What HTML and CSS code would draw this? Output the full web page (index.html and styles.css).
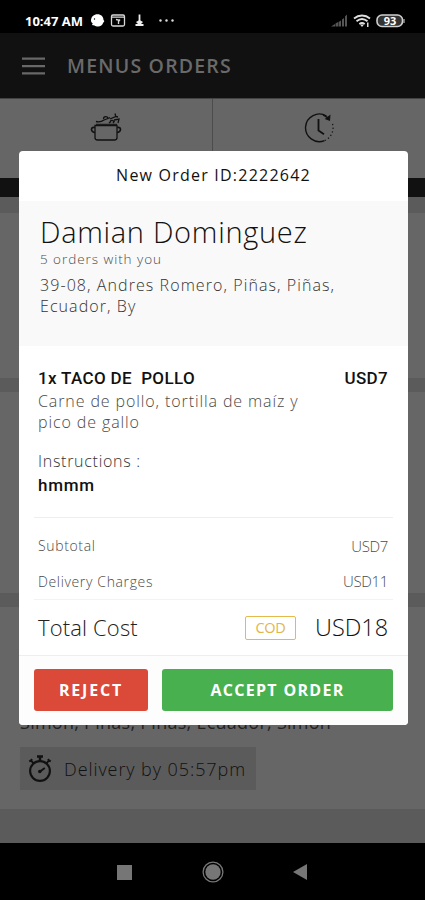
FILE: index.html
```
<!DOCTYPE html>
<html lang="en">
<head>
<meta charset="utf-8">
<title>Menus Orders</title>
<link rel="stylesheet" href="styles.css">
</head>
<body>
<div class="screen">
  <div class="status">
    <span class="time">10:47 AM</span>
    <svg class="notif" width="86" height="16" viewBox="0 0 86 16">
      <path fill="#fff" d="M1 7.500C1 3.500 4 1.200 7.500 1.200S13.500 3.500 13.500 7c1.200 1 .8 2.200-.2 2.500C12.500 12 10.500 13.500 8 13.500c-1.500 0-2.500-.3-3.500-1L2 12l.7-1.700C1.500 9.700 1 8.700 1 7.500z"/>
      <circle cx="4.500" cy="6" r=".7"/>
      <rect x="21.500" y="2" width="13" height="11" rx="1.500" fill="none" stroke="#d8d8d8" stroke-width="1.300"/>
      <path d="M22 4.200h12M26 6.500l2.500.5V11M30 6.500l-1.500 2" fill="none" stroke="#d8d8d8" stroke-width="1.300"/>
      <path d="M49.500 1.500v7M45.500 12h8" fill="none" stroke="#eee" stroke-width="1.800"/>
      <path d="M46 9l3.500 3.500L53 9l-2.500-1.500h-2z" fill="#eee"/>
      <g fill="#ddd"><circle cx="70.500" cy="7.500" r="1.200"/><circle cx="76.500" cy="7.500" r="1.200"/><circle cx="82.500" cy="7.500" r="1.200"/></g>
    </svg>
    <svg class="signals" width="76" height="16" viewBox="0 0 76 16">
      <g fill="#555"><path d="M0 13.500l4-2.500v2.500zM4.500 10.500l2.500-1.500v4.500H4.500zM7.500 9l2.500-1.500v6H7.500zM11 6.500l2-1.500v8.500h-2zM14 3.500l2-2v12h-2z"/></g>
      <g fill="none" stroke="#ddd" stroke-width="1.800"><path d="M23 5.500c4.700-4 11.300-4 16 0M25.500 8.300c3.400-2.800 7.600-2.800 11 0M28.300 11c1.800-1.300 3.600-1.300 5.400 0"/></g>
      <path d="M29 11.500h4l-2 2.500zM36 9.500h1.500V14H36z" fill="#ddd"/>
      <rect x="46" y="2" width="25.500" height="11.500" rx="5" fill="#333" stroke="#d0d0d0" stroke-width="1.600"/>
      <path d="M73 6v4" stroke="#bbb" stroke-width="1.200"/>
      <text x="59" y="11.500" text-anchor="middle" class="battery">93</text>
    </svg>
  </div>

  <header class="appbar">
    <svg width="24" height="18" viewBox="0 0 24 18"><path d="M0 1.700h23M0 9.200h23M0 16.300h23" stroke="#686868" stroke-width="2.200"/></svg>
    <h1>MENUS ORDERS</h1>
  </header>

  <div class="tabs">
    <div class="tab">
      <svg width="32" height="30" viewBox="0 0 32 30" fill="none" stroke="#111" stroke-width="1.300">
        <path d="M5 13.500h22v12q0 2.500-2.500 2.500h-17Q5 28 5 25.500z"/>
        <path d="M4.800 15.500C2.500 15 1.500 16 1.500 17.500s1.800 3 3.500 3M27.200 15.500c2.300-.5 3.300.5 3.300 2s-1.800 3-3.500 3" stroke-width="1.600"/>
        <path d="M6 12.300h21" stroke-width="1"/>
        <path d="M6 9.500c3 .8 5.500.3 8-1.500l4-1.500 2-1M13.500 7c0-3 4-3.200 4.500-.5M20 7l6-2.500 2 .5M20 9.500c1.500-1.500 3-1.500 4 .5M25 1.500l.8 3M24 8l5-1-1 4M19 11l2-1.500M23 11l1.500-2" stroke-width="1.300"/>
      </svg>
    </div>
    <div class="tab">
      <svg width="32" height="32" viewBox="0 0 32 32" fill="none" stroke="#111">
        <path d="M23.500 4A13.800 13.800 0 1 0 21.500 28.600" stroke-width="1.400"/>
        <path d="M29.500 12A13.800 13.800 0 0 1 21.500 28.600" stroke-width="1.300" stroke-dasharray="1.200 2.500"/>
        <path d="M20 2.800l5 3" stroke-width="1.400"/>
        <path d="M27.500 2.500l-.5 6.500-5.300-2z" fill="#111" stroke="none"/>
        <path d="M15.500 7v11.500l5.500 3.700" stroke-width="1.800"/>
      </svg>
    </div>
  </div>
  <div class="strip"></div>

  <main class="feed">
    <div class="card first"></div>
    <div class="card second"></div>
    <div class="card third">
      <p class="addr">Simon, Piñas, Piñas, Ecuador, Simon</p>
      <div class="chip">
        <svg width="24" height="28" viewBox="0 0 24 28" fill="none" stroke="#111">
          <circle cx="12" cy="16" r="9.900" stroke-width="2.100"/>
          <path d="M9 1.600h6M12 1.500v5" stroke-width="2.500"/>
          <path d="M1.300 6.500l3-2.300M22.700 6.500l-3-2.300M3 5.300l2.500 3M21 5.300l-2.500 3" stroke-width="1.900"/>
          <path d="M12 16.500l4.800-3.500" stroke-width="2"/><circle cx="11.800" cy="16.500" r="1.800" fill="#111" stroke="none"/>
        </svg>
        <span>Delivery by 05:57pm</span>
      </div>
    </div>
  </main>

  <nav class="navbar">
    <svg width="15" height="15"><rect width="15" height="15" fill="#767676"/></svg>
    <svg width="22" height="22" viewBox="0 0 22 22"><circle cx="11" cy="11" r="9.900" fill="none" stroke="#777" stroke-width="1.300"/><circle cx="11" cy="11" r="7.700" fill="#767676"/></svg>
    <svg width="14" height="16"><path d="M0 8L14 0v16z" fill="#767676"/></svg>
  </nav>

  <section class="modal">
    <h2 class="title">New Order ID:2222642</h2>
    <div class="customer">
      <div class="name">Damian Dominguez</div>
      <div class="count">5 orders with you</div>
      <div class="address">39-08, Andres Romero, Piñas, Piñas,<br>Ecuador, By</div>
    </div>
    <div class="items">
      <div class="item"><span>1x TACO DE&nbsp; POLLO</span><span class="price">USD7</span></div>
      <div class="desc">Carne de pollo, tortilla de maíz y<br>pico de gallo</div>
      <div class="label">Instructions :</div>
      <div class="note">hmmm</div>
    </div>
    <div class="costs">
      <div class="row"><span>Subtotal</span><span class="amount">USD7</span></div>
      <div class="row"><span>Delivery Charges</span><span class="amount">USD11</span></div>
    </div>
    <div class="total">
      <span class="total-label">Total Cost</span>
      <span class="cod">COD</span>
      <span class="total-price">USD18</span>
    </div>
    <div class="actions">
      <button class="btn reject">REJECT</button>
      <button class="btn accept">ACCEPT ORDER</button>
    </div>
  </section>
</div>
</body>
</html>
```
FILE: styles.css
```
* { box-sizing: border-box; }
body { margin: 0; font-family: "Open Sans", sans-serif; }
h1, h2, p { margin: 0; }
svg { display: block; flex: none; }
.screen { position: relative; width: 425px; height: 900px; overflow: hidden; background: #000; display: flex; flex-direction: column; }

.status { height: 33px; flex: none; display: flex; align-items: flex-start; padding: 13px 18px 0 25px; }
.time { width: 65px; color: #fff; font: 700 13px/16px "Open Sans", sans-serif; white-space: nowrap; }
.signals { margin-left: auto; }
.battery { font: 700 11px "Open Sans", sans-serif; fill: #fff; }

.appbar { height: 65px; flex: none; background: #111; display: flex; align-items: center; gap: 21px; padding-left: 22px; }
.appbar h1 { font-size: 19.5px; line-height: 26px; font-weight: 600; letter-spacing: 1.2px; color: #6a6a6a; }

.tabs { height: 80px; flex: none; display: flex; background: #666; border-top: 1px solid #444; }
.tab { flex: 1; display: flex; justify-content: center; padding-top: 13px; }
.tab + .tab { border-left: 1px solid #4c4c4c; }
.strip { height: 19px; flex: none; background: #111; }

.feed { height: 646px; flex: none; background: #5b5b5b; padding-top: 16px; display: flex; flex-direction: column; gap: 14px; }
.card { background: #666; flex: none; }
.first { height: 165px; }
.second { height: 201px; }
.third { height: 202px; padding: 103px 20px 0; }
.addr { color: #222; font-size: 18px; line-height: 24px; height: 37px; font-weight: 400; letter-spacing: .26px; white-space: nowrap; }
.chip { width: 236px; height: 43px; background: #5b5b5b; display: flex; align-items: center; gap: 12px; padding-left: 8px; color: #111; font-size: 18px; font-weight: 300; letter-spacing: .92px; white-space: nowrap; }

.navbar { height: 57px; flex: none; display: flex; align-items: center; gap: 69.5px; padding: 1px 0 0 117px; }

.modal { position: absolute; left: 19px; top: 151px; width: 389px; height: 574px; background: #fff; border-radius: 4px; overflow: hidden; color: #333; font-weight: 300; white-space: nowrap; }
.title { height: 50px; font-size: 16px; line-height: 49px; font-weight: 500; letter-spacing: 1.22px; color: #111; text-align: center; }
.customer { height: 145px; background: #f9f9f9; padding: 12px 21px 0; }
.name { font-size: 29px; line-height: 38px; letter-spacing: .7px; color: #111; }
.count { font-size: 13.5px; line-height: 16px; letter-spacing: .95px; color: #4a4a4a; }
.address { font-size: 16px; line-height: 21px; letter-spacing: 1.08px; padding-top: 8px; }
.items { margin: 0 15px 0 15px; height: 172px; padding: 20px 4px 0 4px; border-bottom: 1px solid #eee; }
.item { display: flex; justify-content: space-between; font: 500 17px/24px Roboto, sans-serif; letter-spacing: .35px; color: #111; }
.price { margin-right: 1px; }
.desc { font-size: 16px; line-height: 21px; letter-spacing: .9px; padding-top: 1px; color: #4a4a4a; }
.label { font-size: 16px; line-height: 22px; letter-spacing: .72px; padding-top: 17px; color: #333; }
.note { font: 500 17px/24px Roboto, sans-serif; letter-spacing: .7px; color: #111; padding-top: 1px; }
.costs { margin: 0 15px 0 15px; padding: 10px 5px 0 4px; height: 82px; border-bottom: 1px solid #f3f3f3; }
.row { height: 35.500px; display: flex; align-items: center; justify-content: space-between; font-size: 14px; letter-spacing: .64px; color: #4a4a4a; }
.amount { font-size: 15px; letter-spacing: -.35px; }
.total { height: 56px; display: flex; align-items: center; padding: 0 20px 1px 19px; border-bottom: 1px solid #eee; }
.total-label { font-size: 22px; line-height: 30px; letter-spacing: .15px; color: #222; }
.cod { margin: 2px 0 0 auto; width: 51px; height: 24px; border: 1.500px solid #e6b94c; border-radius: 2px; color: #e2b54a; font-size: 14.500px; line-height: 21px; text-align: center; font-weight: 400; letter-spacing: -.3px; }
.total-price { width: 73px; margin-left: 19px; font-size: 23.500px; line-height: 30px; color: #111; }
.actions { display: flex; gap: 14px; padding: 13px 15px 0; background: #fdfdfd; height: 69px; }
.btn { height: 42px; border: 0; border-radius: 3px; padding: 0; color: #fff; font: 700 16px/42px "Open Sans", sans-serif; }
.reject { width: 114px; background: #db4a38; letter-spacing: 1.8px; }
.accept { flex: 1; background: #49b04f; letter-spacing: 1.3px; }
```
